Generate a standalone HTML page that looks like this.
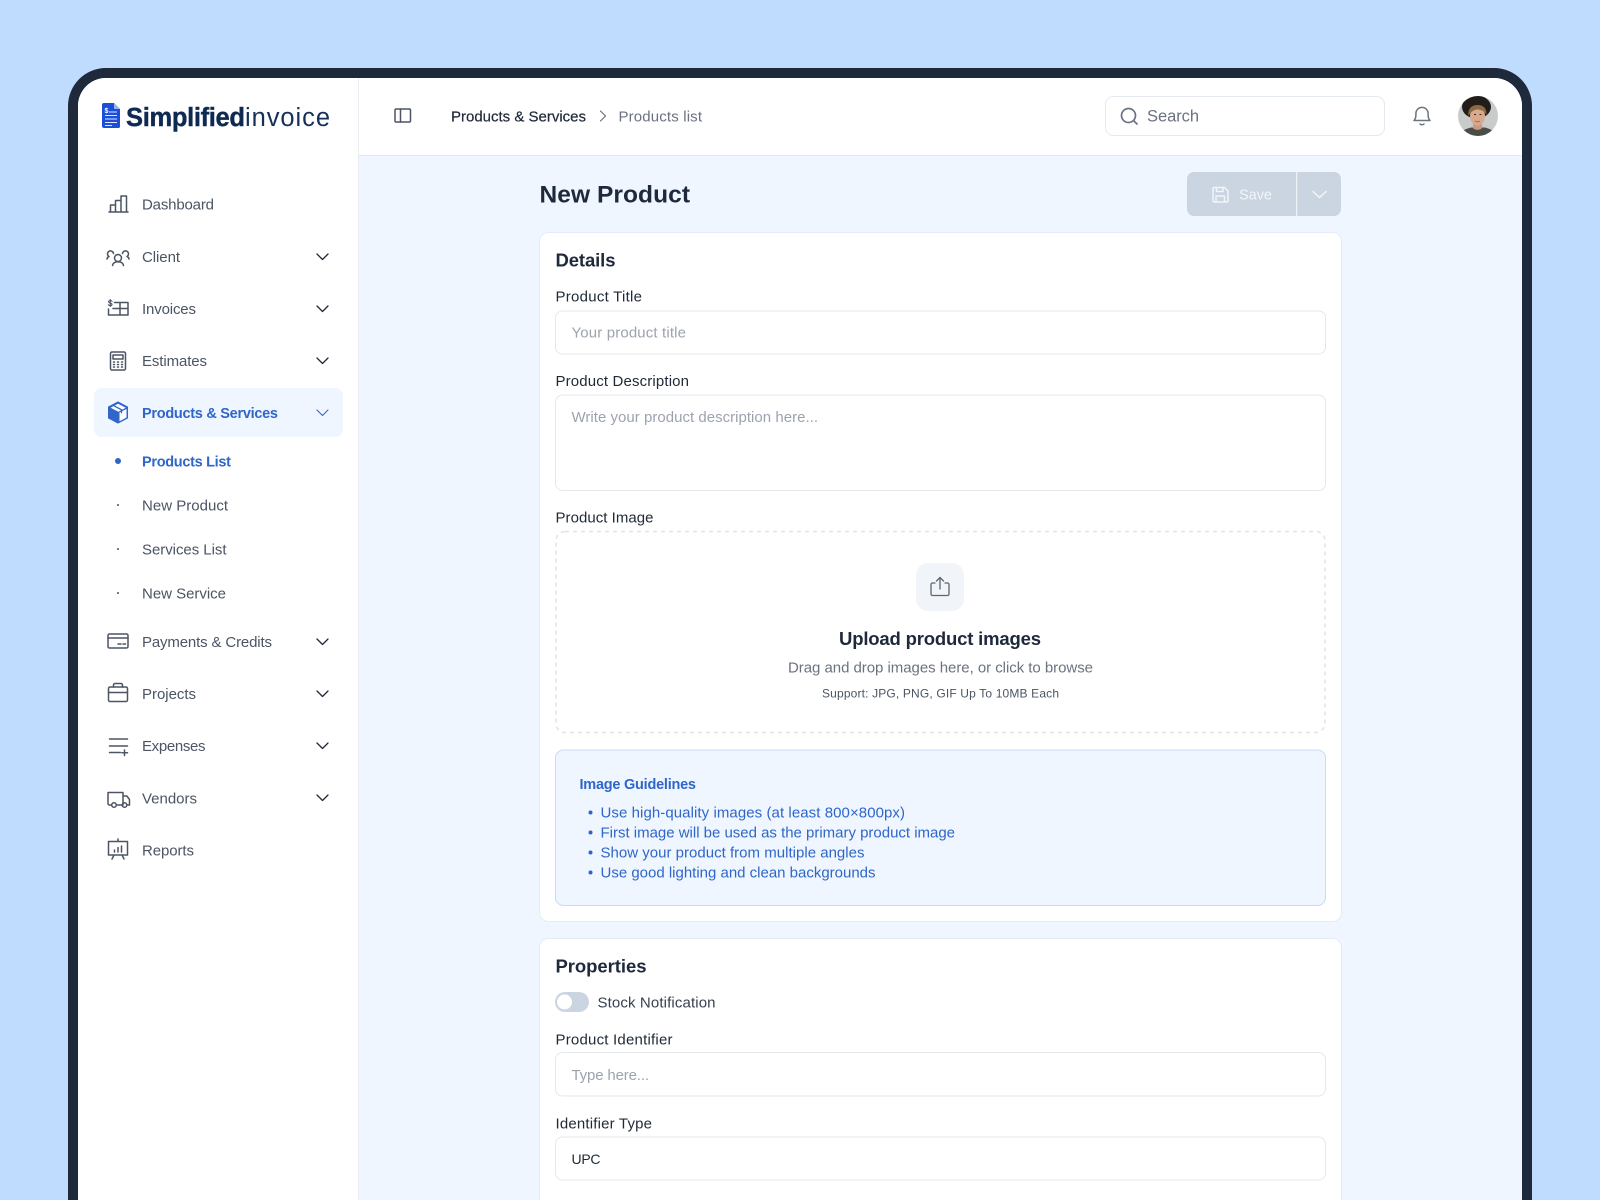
<!DOCTYPE html>
<html lang="en"><head><meta charset="utf-8"><title>New Product</title>
<style>
html,body{margin:0;padding:0;width:1600px;height:1200px;overflow:hidden;background:#bfdbfe}
svg{display:block}
text{font-family:"Liberation Sans",sans-serif;font-size:15px;white-space:pre}
.n{fill:#4b5563}
.a{fill:#2f66c8;font-weight:700;font-size:14.500px}
.l{fill:#1f2937}
.p{fill:#9ca3af}
.m{fill:#6b7280}
.h{fill:#1e293b;font-weight:700}
.g{fill:#2f66c8}
.i{fill:none;stroke:#4b5563;stroke-width:1.500;stroke-linecap:round;stroke-linejoin:round}
.c{fill:none;stroke:#1f2937;stroke-width:1.300;stroke-linecap:round;stroke-linejoin:round}
</style></head><body>
<svg xmlns="http://www.w3.org/2000/svg" width="1600" height="1200" viewBox="0 0 1600 1200">
<rect width="1600" height="1200" fill="#bfdbfe"/>
<path d="M68 1200V106a38 38 0 0 1 38-38H1494a38 38 0 0 1 38 38V1200z" fill="#1e293b"/>
<path d="M78 1200V106a28 28 0 0 1 28-28H1494a28 28 0 0 1 28 28V1200z" fill="#eff6ff"/>
<path d="M78 1200V106a28 28 0 0 1 28-28H358V1200z" fill="#fff"/>
<path d="M358 78H1494a28 28 0 0 1 28 28V155H358z" fill="#fff"/>
<rect x="358" y="155" width="1164" height="1" fill="#e2e8f0"/>
<rect x="358" y="78" width="1" height="1122" fill="#e8edf4"/>

<!-- logo -->
<path d="M104 103h10l6 6v17.500a1.500 1.500 0 0 1-1.500 1.500H104a2 2 0 0 1-2-2V105a2 2 0 0 1 2-2z" fill="#1d4ed8"/>
<path d="M114 103l6 6h-6z" fill="#93b4f0"/>
<path d="M109 112h8M105 115.500h12M105 119h12M105 122.500h12M105 125.500h7" stroke="#dbe7ff" stroke-width="1" fill="none"/>
<text x="104.500" y="113" style="font-size:7px;font-weight:700" fill="#fff">$</text>
<text x="126" y="126" textLength="119" style="font-size:25.500px;font-weight:700;stroke:#0f2a52;stroke-width:.4" fill="#0f2a52">Simplified</text>
<text x="245" y="126" textLength="85" style="font-size:25.500px" fill="#15305a">invoice</text>

<!-- nav active bg -->
<rect x="94" y="388" width="249" height="49" rx="8" fill="#eff6ff"/>

<!-- nav labels -->
<text class="n" x="142" y="209.300" textLength="72">Dashboard</text>
<text class="n" x="142" y="261.800" textLength="38">Client</text>
<text class="n" x="142" y="313.800" textLength="54">Invoices</text>
<text class="n" x="142" y="365.800" textLength="65">Estimates</text>
<text class="a" x="142" y="417.800" textLength="136">Products &amp; Services</text>
<text class="a" x="142" y="466.300" textLength="89">Products List</text>
<text class="n" x="142" y="510.300" textLength="86">New Product</text>
<text class="n" x="142" y="554.300" textLength="84.500">Services List</text>
<text class="n" x="142" y="598.300" textLength="84">New Service</text>
<text class="n" x="142" y="646.800" textLength="130">Payments &amp; Credits</text>
<text class="n" x="142" y="698.800" textLength="54">Projects</text>
<text class="n" x="142" y="750.800" textLength="63.500">Expenses</text>
<text class="n" x="142" y="803.300" textLength="55">Vendors</text>
<text class="n" x="142" y="855.300" textLength="52">Reports</text>

<!-- sub dots -->
<circle cx="118" cy="461" r="3" fill="#2f66c8"/>
<circle cx="118" cy="505" r="1" fill="#4b5563"/>
<circle cx="118" cy="549" r="1" fill="#4b5563"/>
<circle cx="118" cy="593" r="1" fill="#4b5563"/>

<!-- chevrons -->
<g class="c">
<path d="M317 254l5.500 5.500 5.500-5.500"/>
<path d="M317 306l5.500 5.500 5.500-5.500"/>
<path d="M317 358l5.500 5.500 5.500-5.500"/>
<path d="M317 410l5.500 5.500 5.500-5.500" style="stroke:#2f66c8;stroke-width:1.100"/>
<path d="M317 639l5.500 5.500 5.500-5.500"/>
<path d="M317 691l5.500 5.500 5.500-5.500"/>
<path d="M317 743l5.500 5.500 5.500-5.500"/>
<path d="M317 795l5.500 5.500 5.500-5.500"/>
</g>

<!-- nav icons -->
<g class="i">
<path d="M109 212h19M110.500 212v-7h5v7M115.500 212v-11.500h5.500V212M121 212v-16h5.500v16"/>
<circle cx="118" cy="258" r="3.500"/>
<path d="M112.500 265.500c.5-2.400 2.500-3.700 5.500-3.700s5 1.300 5.500 3.700"/>
<path d="M113.500 253.500a3 3 0 1 0-4.500 3c-1.100.4-1.800 1.200-2 2.500"/>
<path d="M122.500 253.500a3 3 0 1 1 4.500 3c1.100.4 1.800 1.200 2 2.500"/>
<path d="M114.500 302.500H128V315H108.500V309M113 308.500H128M120 302.500V315"/>
<path d="M112 301.300c-.5-1-3-1.200-3.400.2-.4 1.600 3.400 1.400 3.400 3 0 1.600-3 1.500-3.600.2M110.300 299.500v7" stroke-width="1.100"/>
<rect x="110.500" y="352" width="15" height="18" rx="1.500"/>
<rect x="113" y="355" width="10" height="4"/>
<path d="M113.500 362h1M117.500 362h1M121.500 362h1M113.500 364.500h1M117.500 364.500h1M121.500 364.500h1M113.500 367h1M117.500 367h1M121.500 367h1"/>
<rect x="108" y="634" width="20" height="14" rx="1.500"/><path d="M108 638h20M118 644h3M123 644h2.500"/>
<path d="M113.500 687v-2a1.500 1.500 0 0 1 1.500-1.500h6a1.500 1.500 0 0 1 1.500 1.500v2"/>
<rect x="108.500" y="687" width="19" height="14.500" rx="1.500"/><path d="M108.500 692.500h19M116 692.500h4"/>
<path d="M109.500 739h18M109.500 746h18M109.500 752.500h11M124.500 750v5.500M122 752.700h5.500"/>
<path d="M111.500 805h-2a1.500 1.500 0 0 1-1.500-1.500V792.500h15V805h-6M123 796h3.800l2.700 3.500V805h-2.500M123 805h-1"/>
<circle cx="114" cy="805" r="2.300"/><circle cx="124.500" cy="805" r="2.300"/>
<path d="M108.500 841.500h19v13.500h-19zM118 839v2.500M112 859l2-4M124 859l-2-4M114.500 852v-2M118 852v-4.500M121.500 852v-6"/>
</g>
<!-- box active -->
<path d="M118 402l9.500 5v11l-9.500 5-9.500-5v-11z" fill="#2f66c8" stroke="#2f66c8" stroke-width="1" stroke-linejoin="round"/>
<path d="M118 403.800l7.800 4-7.400 3.900-7.800-4z" fill="#fff"/>
<path d="M119.500 412.500l7-3.500v8.500l-7 3.800z" fill="#fff"/>
<path d="M114 405.800l7.500 4v3.500" stroke="#2f66c8" stroke-width="1.300" fill="none"/>

<!-- header -->
<g class="i"><rect x="395" y="109" width="15.500" height="13" rx="1.200"/><path d="M400.500 109v13"/></g>
<text x="451" y="121.300" textLength="135" fill="#1f2937" style="stroke:#1f2937;stroke-width:.2">Products &amp; Services</text>
<path d="M600.500 111l5 5-5 5" fill="none" stroke="#6b7280" stroke-width="1.200" stroke-linecap="round" stroke-linejoin="round"/>
<text class="m" x="618.500" y="121.300" textLength="83.500">Products list</text>
<rect x="1105.500" y="96.500" width="279" height="39" rx="8" fill="#fff" stroke="#e5e9f0"/>
<circle cx="1128.500" cy="115.500" r="7" fill="none" stroke="#6b7280" stroke-width="1.700"/>
<path d="M1133.500 120.500l3.500 3.500" stroke="#6b7280" stroke-width="1.700" stroke-linecap="round"/>
<text class="m" x="1147" y="121.500" textLength="52" style="font-size:16.500px">Search</text>
<path d="M1414 120.500c1.200-1.300 1.900-2.500 1.900-5.500v-1.600a6.100 6.100 0 0 1 12.200 0v1.600c0 3 .7 4.200 1.900 5.500z" fill="none" stroke="#6b7280" stroke-width="1.500" stroke-linejoin="round"/>
<path d="M1420 124c1 1 3 1 4 0" fill="none" stroke="#6b7280" stroke-width="1.500" stroke-linecap="round"/>

<!-- avatar -->
<clipPath id="av"><circle cx="1478" cy="116" r="20"/></clipPath>
<g clip-path="url(#av)">
<rect x="1458" y="96" width="40" height="40" fill="#c9cbca"/>
<ellipse cx="1476.500" cy="107" rx="14.500" ry="11.500" fill="#221d1a"/>
<path d="M1460 136c1-5 5-7 11-8.500h14c6 1.500 9 3.500 12 8.500z" fill="#4a4c48"/>
<path d="M1473 122h9v6c-2 2.500-7 2.500-9 0z" fill="#c99a80"/>
<ellipse cx="1477.500" cy="116" rx="7.500" ry="9.500" fill="#d8a98d"/>
<path d="M1468.500 116c-1-7 3-11 9-11s9.500 3.500 9 10c-1.500-3.500-5-5.500-9-5.500-3.500 0-6.500 2-9 6.500z" fill="#8a6a45"/>
<path d="M1474 114.500h2M1479.500 114.500h2" stroke="#3a2a22" stroke-width="1"/>
<path d="M1475 121c1.500 1 3.500 1 5 0" stroke="#a56a5a" stroke-width="1" fill="none"/>
</g>

<!-- title + save -->
<text x="539.500" y="202.500" textLength="150.500" style="font-size:24.500px;font-weight:700" fill="#1e293b">New Product</text>
<rect x="1187" y="172" width="154" height="44" rx="7" fill="#cbd5e1"/>
<rect x="1296" y="172" width="1.200" height="44" fill="#eef2f7"/>
<g fill="none" stroke="#f1f5f9" stroke-width="1.500" stroke-linejoin="round" stroke-linecap="round">
<path d="M1214.500 187.500h10l3.500 3.500v9.500a1.500 1.500 0 0 1-1.500 1.500h-12a1.500 1.500 0 0 1-1.500-1.500V189a1.500 1.500 0 0 1 1.500-1.500z"/>
<path d="M1216.500 187.500v4h6.500v-4M1216 202v-6h8.500v6"/>
<path d="M1313 191.500l6.500 6 6.500-6"/>
</g>
<text x="1239" y="199.500" textLength="33" style="font-size:14.500px" fill="#f1f5f9">Save</text>

<!-- card 1 -->
<rect x="539.500" y="232.500" width="802" height="689" rx="9" fill="#fff" stroke="#e6ecf4"/>
<text class="h" x="555.500" y="266.500" textLength="60" style="font-size:18.500px;fill:#1e293b">Details</text>
<text class="l" x="555.500" y="301.300" textLength="86.500">Product Title</text>
<rect x="555.500" y="311" width="770" height="43" rx="7" fill="#fff" stroke="#e5e7eb"/>
<text class="p" x="571.500" y="337.300" textLength="114.500">Your product title</text>
<text class="l" x="555.500" y="385.800" textLength="133.500">Product Description</text>
<rect x="555.500" y="395" width="770" height="95.500" rx="7" fill="#fff" stroke="#e5e7eb"/>
<text class="p" x="571.500" y="421.800" textLength="246.500">Write your product description here...</text>
<text class="l" x="555.500" y="522.300" textLength="98">Product Image</text>
<rect x="556" y="531.500" width="769" height="201" rx="9" fill="#fff" stroke="#dde3ec" stroke-width="1.500" stroke-dasharray="4 4"/>
<rect x="916" y="563" width="48" height="48" rx="12" fill="#f1f5f9"/>
<g fill="none" stroke="#5b6675" stroke-width="1.300" stroke-linecap="round" stroke-linejoin="round">
<path d="M935 583h-2.500a1.500 1.500 0 0 0-1.500 1.500v9.500a1.500 1.500 0 0 0 1.500 1.500h15a1.500 1.500 0 0 0 1.500-1.500v-9.500a1.500 1.500 0 0 0-1.500-1.500H945"/>
<path d="M940 589v-11.500M936.500 581l3.500-3.500 3.500 3.500"/>
</g>
<text x="839" y="645" textLength="202" style="font-size:18.500px;font-weight:700" fill="#1e293b">Upload product images</text>
<text class="m" x="788" y="672.300" textLength="305">Drag and drop images here, or click to browse</text>
<text x="822" y="697.500" textLength="237" style="font-size:12px" fill="#4b5563">Support: JPG, PNG, GIF Up To 10MB Each</text>
<rect x="555.500" y="750" width="770" height="155.500" rx="8" fill="#eff6ff" stroke="#c8dcf4"/>
<text class="a" x="579.500" y="789" textLength="116.500">Image Guidelines</text>
<text class="g" x="600.500" y="817.300" textLength="304.500">Use high-quality images (at least 800×800px)</text>
<text class="g" x="600.500" y="837.300" textLength="354.500">First image will be used as the primary product image</text>
<text class="g" x="600.500" y="857.300" textLength="264">Show your product from multiple angles</text>
<text class="g" x="600.500" y="877.300" textLength="275">Use good lighting and clean backgrounds</text>
<circle cx="590.500" cy="812.500" r="2" fill="#2f66c8"/>
<circle cx="590.500" cy="832.500" r="2" fill="#2f66c8"/>
<circle cx="590.500" cy="852.500" r="2" fill="#2f66c8"/>
<circle cx="590.500" cy="872.500" r="2" fill="#2f66c8"/>

<!-- card 2 -->
<path d="M539.500 1201V947.500a9 9 0 0 1 9-9H1332.500a9 9 0 0 1 9 9V1201" fill="#fff" stroke="#e6ecf4"/>
<rect x="540" y="1190" width="801" height="10" fill="#fff"/>
<text class="h" x="555.500" y="972.500" textLength="91" style="font-size:18.500px">Properties</text>
<rect x="555" y="992" width="34" height="20" rx="10" fill="#cbd5e1"/>
<circle cx="564.500" cy="1002" r="7.500" fill="#fff"/>
<text x="597.500" y="1007.300" textLength="118" fill="#374151">Stock Notification</text>
<text class="l" x="555.500" y="1044.300" textLength="117">Product Identifier</text>
<rect x="555.500" y="1052.500" width="770" height="43.500" rx="7" fill="#fff" stroke="#e5e7eb"/>
<text class="p" x="571.500" y="1080" textLength="77.500">Type here...</text>
<text class="l" x="555.500" y="1128.300" textLength="96.500">Identifier Type</text>
<rect x="555.500" y="1137" width="770" height="43" rx="7" fill="#fff" stroke="#e5e7eb"/>
<text class="l" x="571.500" y="1164" textLength="29" style="font-size:14px">UPC</text>
</svg>
</body></html>
